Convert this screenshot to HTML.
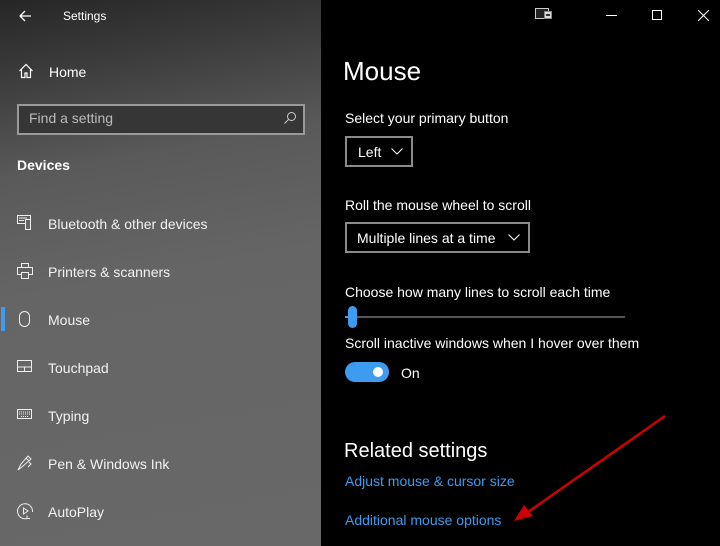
<!DOCTYPE html>
<html><head><style>
*{margin:0;padding:0;box-sizing:border-box}
body{width:720px;height:546px;overflow:hidden;background:#000;font-family:"Liberation Sans",sans-serif;position:relative}
.side{position:absolute;left:0;top:0;width:321px;height:546px;background:linear-gradient(170deg,#262626 0%,#3a3a3a 12%,#5a5a5a 30%,#656565 50%,#686868 100%)}
.t{position:absolute;color:#fff;white-space:nowrap}
.item{position:absolute;left:48px;color:#f2f2f2;font-size:14px}
.ic{position:absolute;left:17px}
.main .t{color:#fff}
.box{position:absolute;border:2px solid #8a8a8a;color:#fff;font-size:14px}
.link{position:absolute;left:345px;color:#3d9bf0;font-size:14px}
</style></head><body>
<div class="side">
<svg class="ic" style="left:18px;top:9px" width="14" height="14" viewBox="0 0 14 14"><path d="M13 7H2M7 2L2 7l5 5" stroke="#fff" stroke-width="1.3" fill="none"/></svg>
<div class="t" style="left:63px;top:9px;font-size:12px">Settings</div>
<svg class="ic" style="left:18px;top:63px" width="16" height="16" viewBox="0 0 16 16"><path d="M1.5 8L8 1.5 14.5 8M3.5 6v8.5h3.5v-4.5h2v4.5h3.5V6" stroke="#fff" stroke-width="1.2" fill="none"/></svg>
<div class="t" style="left:49px;top:64px;font-size:14px">Home</div>
<div style="position:absolute;left:17px;top:104px;width:288px;height:31px;border:2px solid #9a9a9a;background:#363636"></div>
<div class="t" style="left:29px;top:110px;font-size:14px;color:#bbb">Find a setting</div>
<svg class="ic" style="left:283px;top:111px" width="14" height="14" viewBox="0 0 14 14"><circle cx="8.5" cy="5.5" r="4" stroke="#ccc" fill="none"/><path d="M5.5 8.5L1.5 12.5" stroke="#ccc"/></svg>
<div class="t" style="left:17px;top:157px;font-size:14px;font-weight:bold">Devices</div>

<svg class="ic" style="top:215px" width="16" height="16" viewBox="0 0 16 16" fill="none" stroke="#eee"><rect x="0.5" y="0.5" width="13" height="8"/><rect x="8.5" y="4.5" width="5" height="10" fill="#666"/><path d="M2 3h8M2 5.5h5"/></svg>
<div class="item" style="top:216px">Bluetooth &amp; other devices</div>
<svg class="ic" style="top:263px" width="16" height="16" viewBox="0 0 16 16" fill="none" stroke="#eee"><rect x="4.5" y="0.5" width="7" height="4"/><rect x="0.5" y="4.5" width="15" height="7"/><rect x="4.5" y="9.5" width="7" height="6" fill="#666"/></svg>
<div class="item" style="top:264px">Printers &amp; scanners</div>
<div style="position:absolute;left:1px;top:307px;width:4px;height:24px;background:#3d9bf0"></div>
<svg class="ic" style="top:311px" width="16" height="16" viewBox="0 0 16 16" fill="none" stroke="#eee"><rect x="2.5" y="0.5" width="10" height="15" rx="5"/></svg>
<div class="item" style="top:312px">Mouse</div>
<svg class="ic" style="top:360px" width="16" height="14" viewBox="0 0 16 14" fill="none" stroke="#eee"><rect x="0.5" y="0.5" width="14" height="11"/><path d="M0.5 7h14M7.5 7v5"/></svg>
<div class="item" style="top:360px">Touchpad</div>
<svg class="ic" style="top:409px" width="16" height="12" viewBox="0 0 16 12" fill="none" stroke="#eee"><rect x="0.5" y="0.5" width="14" height="9"/><path d="M2 3h11M2 5h11M4 7.5h7" stroke-dasharray="1 1"/></svg>
<div class="item" style="top:408px">Typing</div>
<svg class="ic" style="top:455px" width="16" height="16" viewBox="0 0 16 16" fill="none" stroke="#eee"><path d="M1 15l3-6 7-8 3 3-8 7zM9 3l3 3M12 7l2 2-3 3"/></svg>
<div class="item" style="top:456px">Pen &amp; Windows Ink</div>
<svg class="ic" style="top:503px" width="17" height="17" viewBox="0 0 17 17" fill="none" stroke="#eee"><path d="M10 15.5A7.5 7.5 0 1 1 15.5 9"/><path d="M6.5 5v6l4.5-3z"/><path d="M10 12.5v3h3"/></svg>
<div class="item" style="top:504px">AutoPlay</div>
</div>

<div class="main">
<svg style="position:absolute;left:535px;top:8px" width="18" height="12" viewBox="0 0 18 12"><rect x="0.5" y="0.5" width="13" height="10" fill="#222" stroke="#ccc"/><rect x="9.5" y="3.5" width="7" height="7" fill="#ddd" stroke="#888"/><rect x="11" y="6" width="4" height="2" fill="#333"/></svg>
<div style="position:absolute;left:606px;top:15px;width:11px;height:1px;background:#fff"></div>
<div style="position:absolute;left:652px;top:10px;width:10px;height:10px;border:1px solid #fff"></div>
<svg style="position:absolute;left:698px;top:10px" width="11" height="11" viewBox="0 0 11 11"><path d="M0 0L11 11M11 0L0 11" stroke="#fff"/></svg>

<div class="t" style="left:343px;top:56px;font-size:26px">Mouse</div>
<div class="t" style="left:345px;top:110px;font-size:14px">Select your primary button</div>
<div class="box" style="left:345px;top:136px;width:68px;height:31px"><span style="position:absolute;left:11px;top:6px">Left</span><svg style="position:absolute;left:44px;top:10px" width="12" height="7"><path d="M0.5 0.5L6 6l5.5-5.5" stroke="#fff" fill="none"/></svg></div>
<div class="t" style="left:345px;top:197px;font-size:14px">Roll the mouse wheel to scroll</div>
<div class="box" style="left:345px;top:222px;width:185px;height:31px"><span style="position:absolute;left:10px;top:6px">Multiple lines at a time</span><svg style="position:absolute;left:161px;top:10px" width="12" height="7"><path d="M0.5 0.5L6 6l5.5-5.5" stroke="#fff" fill="none"/></svg></div>
<div class="t" style="left:345px;top:284px;font-size:14px">Choose how many lines to scroll each time</div>
<div style="position:absolute;left:345px;top:316px;width:280px;height:2px;background:#555"></div>
<div style="position:absolute;left:345px;top:316px;width:6px;height:2px;background:#3d9bf0"></div>
<div style="position:absolute;left:348px;top:306px;width:9px;height:22px;border-radius:5px;background:#3d9bf0"></div>
<div class="t" style="left:345px;top:335px;font-size:14px">Scroll inactive windows when I hover over them</div>
<div style="position:absolute;left:345px;top:362px;width:44px;height:20px;border-radius:10px;background:#3d9bf0"></div>
<div style="position:absolute;left:373px;top:367px;width:10px;height:10px;border-radius:5px;background:#fff"></div>
<div class="t" style="left:401px;top:365px;font-size:14px">On</div>
<div class="t" style="left:344px;top:440px;font-size:20px">Related settings</div>
<div class="link" style="top:473px">Adjust mouse &amp; cursor size</div>
<div class="link" style="top:512px">Additional mouse options</div>
<svg style="position:absolute;left:0;top:0" width="720" height="546"><line x1="665" y1="416" x2="528" y2="512" stroke="#c00" stroke-width="2.5"/><path d="M514 521L524 505L533 516z" fill="#c00"/></svg>
</div>
</body></html>
